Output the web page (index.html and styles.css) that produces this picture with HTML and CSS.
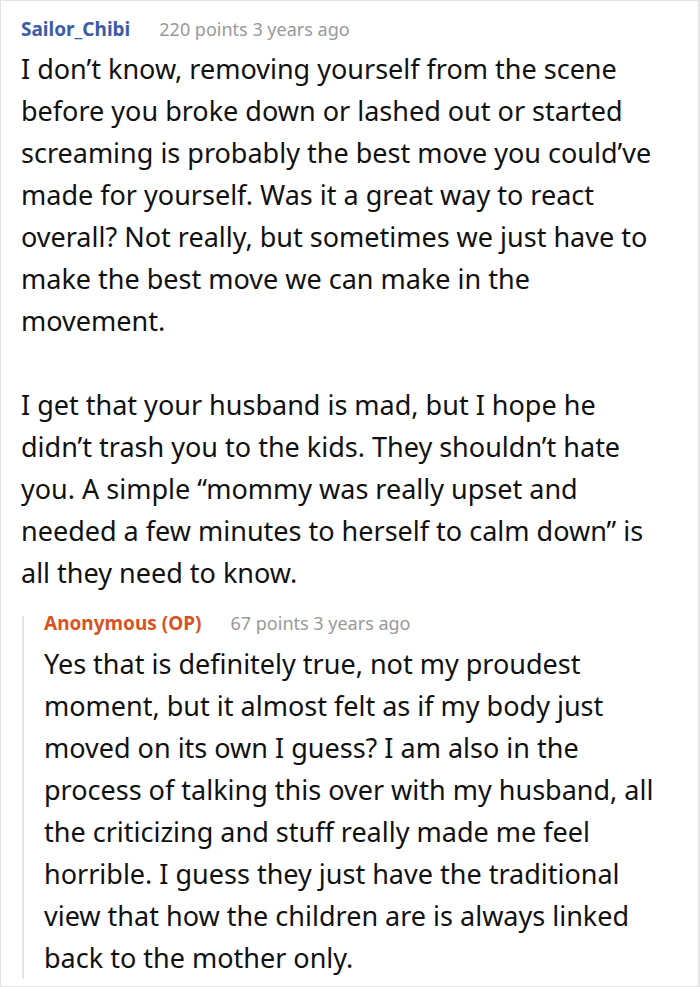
FILE: index.html
```html
<!DOCTYPE html>
<html>
<head>
<meta charset="utf-8">
<link rel="stylesheet" href="styles.css">
</head>
<body>
<div class="card">
  <div class="comment">
    <div class="meta">
      <span class="author">Sailor_Chibi</span>
      <span class="info">220 points 3 years ago</span>
    </div>
    <div class="body">
      <p>I don’t know, removing yourself from the scene before you broke down or lashed out or started screaming is probably the best move you could’ve made for yourself. Was it a great way to react overall? Not really, but sometimes we just have to make the best move we can make in the movement.</p>
      <p>I get that your husband is mad, but I hope he didn’t trash you to the kids. They shouldn’t hate you. A simple “mommy was really upset and needed a few minutes to herself to calm down” is all they need to know.</p>
    </div>
    <div class="reply">
      <div class="meta">
        <span class="author op">Anonymous (OP)</span>
        <span class="info">67 points 3 years ago</span>
      </div>
      <div class="body">
        <p>Yes that is definitely true, not my proudest moment, but it almost felt as if my body just moved on its own I guess? I am also in the process of talking this over with my husband, all the criticizing and stuff really made me feel horrible. I guess they just have the traditional view that how the children are is always linked back to the mother only.</p>
      </div>
    </div>
  </div>
</div>
</body>
</html>
```
FILE: styles.css
```css
html, body {
  margin: 0;
  padding: 0;
  background: #fff;
}
.card {
  box-sizing: border-box;
  width: 700px;
  height: 987px;
  border: 1px solid #e3e3e3;
  border-right-width: 2px;
  overflow: hidden;
  padding: 21px 30px 0 20px;
  font-family: "Noto Sans", "Open Sans", sans-serif;
  color: #111;
}
.meta {
  display: flex;
  align-items: baseline;
  gap: 29px;
  font-size: 18px;
  line-height: 14px;
  margin-bottom: 12px;
}
.author {
  font-size: 19px;
  font-weight: 700;
  color: #3a5ca6;
}
.author.op {
  color: #d8531f;
}
.info {
  color: #999;
}
.body p {
  margin: 0 0 42px;
  font-size: 27px;
  line-height: 42px;
}
.body p:last-child {
  margin-bottom: 0;
}
.reply {
  margin-top: 22px;
  margin-left: 1px;
  border-left: 2px solid #e6e6e6;
  padding-left: 20px;
}
.reply .meta {
  margin-bottom: 13px;
}
.reply .body p:last-child {
  margin-bottom: -17px;
}
```
